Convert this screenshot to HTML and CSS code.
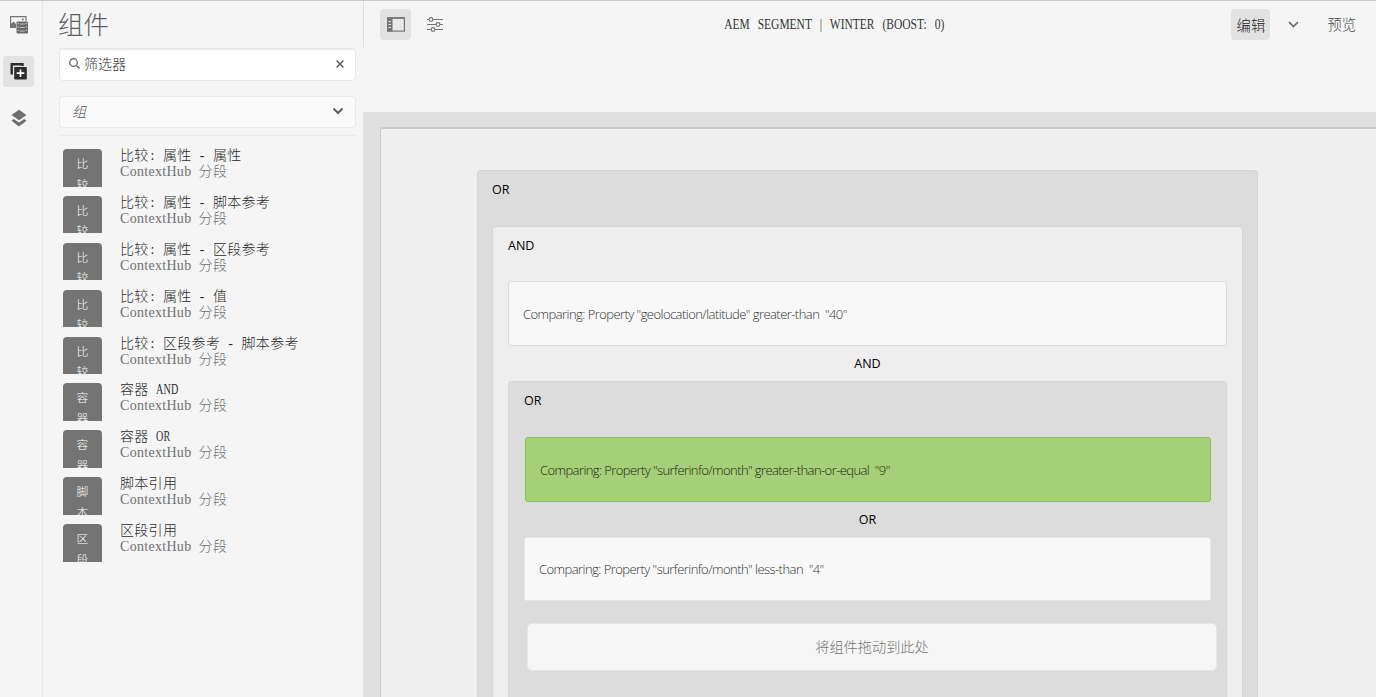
FILE: index.html
```html
<!DOCTYPE html>
<html lang="zh-CN">
<head>
<meta charset="utf-8">
<title>AEM Segment</title>
<link rel="stylesheet" href="styles.css">
</head>
<body>
<div class="app">
  <nav class="rail">
    <button class="rail-btn"><svg width="18" height="18" viewBox="0 0 18 18"><path d="M6 11.500H.6V.6h15.400V5" fill="none" stroke="#747474" stroke-width="1.200"/><path d="M1 11.500V8l2.500-2.500L6 8v3.500z" fill="#747474"/><circle cx="12.800" cy="3.600" r="1" fill="#747474"/><rect x="6.500" y="5.500" width="11.500" height="12" rx="1" fill="#686868"/><path d="M9.800 8h5M9.800 11.500h5M9.800 15h5" stroke="#c9c9c9" stroke-width=".9"/><path d="M8.200 7v10M16.300 7v10" stroke="#f5f5f5" stroke-width=".9" stroke-dasharray="1.200 2.200"/></svg></button>
    <button class="rail-btn active"><svg width="18" height="18" viewBox="0 0 18 18"><path d="M1.700 12.500V2.200h10.800V4" fill="none" stroke="#2c2c2c" stroke-width="2.400"/><rect x="4.200" y="5" width="12.600" height="12.400" rx="1" fill="#2c2c2c"/><path d="M10.500 7.400v7.600M6.700 11.200h7.600" stroke="#fff" stroke-width="1.700"/></svg></button>
    <button class="rail-btn"><svg width="18" height="18" viewBox="0 0 18 18"><path d="M9 .8 16.500 6 9 11.200 1.500 6z" fill="#6e6e6e"/><path d="M3.800 9.900 1.500 11.700 9 17.500l7.500-5.800-2.300-1.800L9 13.600z" fill="#6e6e6e"/></svg></button>
  </nav>
  <aside class="panel">
    <h1 class="panel-title">组件</h1>
    <div class="field search">
      <svg width="11" height="11" viewBox="0 0 11 11" fill="none" stroke="#5a5a5a" stroke-width="1.200"><circle cx="4.500" cy="4.500" r="3.800"/><path d="m7.300 7.300 3.200 3.200"/></svg>
      <span class="field-text">筛选器</span>
      <svg width="8" height="8" viewBox="0 0 8 8" stroke="#5a5a5a" stroke-width="1.400"><path d="m.6.6 6.800 6.800M7.400.6.6 7.400"/></svg>
    </div>
    <div class="field select">
      <span class="field-text">组</span>
      <svg width="12" height="8" viewBox="0 0 12 8" fill="none" stroke="#5e5e5e" stroke-width="2"><path d="m1.500 1.500 4.500 4.500 4.500-4.500"/></svg>
    </div>
    <ul class="list">
      <li class="item"><div class="thumb">比<br>较</div><div class="meta"><p class="name">比较<i class="colon">:</i>属性 <b>-</b> 属性</p><p class="group">ContextHub 分段</p></div></li>
      <li class="item"><div class="thumb">比<br>较</div><div class="meta"><p class="name">比较<i class="colon">:</i>属性 <b>-</b> 脚本参考</p><p class="group">ContextHub 分段</p></div></li>
      <li class="item"><div class="thumb">比<br>较</div><div class="meta"><p class="name">比较<i class="colon">:</i>属性 <b>-</b> 区段参考</p><p class="group">ContextHub 分段</p></div></li>
      <li class="item"><div class="thumb">比<br>较</div><div class="meta"><p class="name">比较<i class="colon">:</i>属性 <b>-</b> 值</p><p class="group">ContextHub 分段</p></div></li>
      <li class="item"><div class="thumb">比<br>较</div><div class="meta"><p class="name">比较<i class="colon">:</i>区段参考 <b>-</b> 脚本参考</p><p class="group">ContextHub 分段</p></div></li>
      <li class="item"><div class="thumb">容<br>器</div><div class="meta"><p class="name">容器 <span class="narrow">AND</span></p><p class="group">ContextHub 分段</p></div></li>
      <li class="item"><div class="thumb">容<br>器</div><div class="meta"><p class="name">容器 <span class="narrow">OR</span></p><p class="group">ContextHub 分段</p></div></li>
      <li class="item"><div class="thumb">脚<br>本</div><div class="meta"><p class="name">脚本引用</p><p class="group">ContextHub 分段</p></div></li>
      <li class="item"><div class="thumb">区<br>段</div><div class="meta"><p class="name">区段引用</p><p class="group">ContextHub 分段</p></div></li>
    </ul>
  </aside>
  <main class="main">
    <header class="topbar">
      <div class="tools">
        <button class="tool active"><svg width="18" height="15" viewBox="0 0 18 15"><rect x=".6" y=".9" width="16.800" height="13.200" fill="#e9e9e9" stroke="#747474" stroke-width="1.200"/><path d="M0 .3h18v1.500H0zM0 1h5.500v13.500H0z" fill="#747474"/><path d="M1.500 4.500H4M1.500 7.500H4M1.500 10.500H4" stroke="#e3e3e3" stroke-width="1"/></svg></button>
        <button class="tool"><svg width="16" height="15" viewBox="0 0 16 15" fill="#f5f5f5" stroke="#747474" stroke-width="1.100"><path d="M0 2.500h16M0 7.500h16M0 12.500h16"/><circle cx="4" cy="2.500" r="1.900"/><circle cx="11" cy="7.500" r="1.900"/><circle cx="6" cy="12.500" r="1.900"/></svg></button>
      </div>
      <div class="doc-title">AEM SEGMENT | WINTER (BOOST: 0)</div>
      <div class="modes">
        <button class="mode active">编辑</button>
        <svg class="chev" width="11" height="7" viewBox="0 0 11 7" fill="none" stroke="#6a6a6a" stroke-width="1.700"><path d="m1 1 4.500 4.500L10 1"/></svg>
        <span class="mode preview">预览</span>
      </div>
    </header>
    <section class="canvas">
      <div class="page">
        <div class="group-box or outer">
          <div class="box-label">OR</div>
          <div class="group-box and">
            <div class="box-label">AND</div>
            <div class="rule"><span class="geo">Comparing: Property "geolocation/latitude" greater-than&nbsp; "40"</span></div>
            <div class="joiner">AND</div>
            <div class="group-box or inner">
              <div class="box-label">OR</div>
              <div class="rule match"><span class="gte">Comparing: Property "surferinfo/month" greater-than-or-equal&nbsp; "9"</span></div>
              <div class="joiner">OR</div>
              <div class="rule plain"><span class="lt">Comparing: Property "surferinfo/month" less-than&nbsp; "4"</span></div>
              <div class="drop">将组件拖动到此处</div>
            </div>
          </div>
        </div>
      </div>
    </section>
  </main>
</div>
</body>
</html>
```
FILE: styles.css
```css
* { box-sizing: border-box; }
body { margin: 0; background: #f5f5f5; font-family: "Open Sans", "Noto Sans CJK SC", sans-serif; font-weight: 300; color: #4b4b4b; }
button { border: 0; padding: 0; background: none; font: inherit; color: inherit; }
h1, p, ul { margin: 0; padding: 0; }
svg { display: block; flex: none; }
.app { display: flex; height: 697px; overflow: hidden; border-top: 1px solid #ccc; }
.rail { width: 43px; flex: none; border-right: 1px solid #e6e6e6; display: flex; flex-direction: column; gap: 15.5px; padding: 8px 0 0 3px; }
.rail-btn { width: 31px; height: 31px; border-radius: 3px; display: flex; align-items: center; justify-content: center; }
.rail-btn.active { background: #e2e2e2; }
.panel { width: 321px; flex: none; padding: 0 8px 0 16px; background: linear-gradient(#dedede, #dedede) right top / 1px 46px no-repeat; }
.panel-title { font: 300 25.500px/44px "Noto Sans CJK SC", sans-serif; color: #5f5f5f; height: 48px; border-bottom: 1px solid #e8e8e8; text-indent: -1px; }
.field { height: 32px; border: 1px solid #e8e8e8; border-radius: 4px; display: flex; align-items: center; background: #fff; font-family: "Noto Sans CJK SC", sans-serif; font-size: 14px; }
.search { padding: 0 11px 3px 9px; }
.search .field-text { margin-left: 4px; padding-bottom: 1px; color: #333; }
.field-text { flex: 1; line-height: 20px; }
.select { margin-top: 15px; background: #fafafa; padding: 0 11px 2px 12px; }
.select .field-text { font-style: italic; color: #5a5a5a; }
.list { list-style: none; margin-top: 7px; border-top: 1px solid #ebebeb; padding: 13px 0 0 4px; }
.item { display: flex; height: 46.9px; }
.thumb { width: 39px; height: 37.5px; flex: none; overflow: hidden; background: #747474; border-radius: 4px 4px 0 0; color: #fff; font: 300 11.800px/20.500px "Noto Sans CJK SC", sans-serif; text-align: center; padding-top: 4px; }
.meta { margin-left: 18px; }
.name, .group { font: 300 14px/16px "Liberation Serif", "Noto Sans CJK SC", serif; height: 16px; letter-spacing: .3px; word-spacing: 3.350px; white-space: pre; }
.name { margin-top: -1px; color: #2c2c2c; }
.group { color: #707070; }
.name b { display: inline-block; width: 7.150px; font-weight: 400; text-align: center; }
.colon { display: inline-block; width: 14.300px; font-style: normal; padding-left: 2px; }
.narrow { display: inline-block; transform: scaleX(.72); transform-origin: left; }
.main { flex: 1; min-width: 0; display: flex; flex-direction: column; margin-left: -1px; }
.topbar { height: 111px; flex: none; display: grid; grid-template-columns: 1fr auto 1fr; align-items: start; padding: 8px 20px 0 17px; }
.tools { display: flex; gap: 8px; }
.tool { width: 31px; height: 31px; border-radius: 4px; display: flex; align-items: center; justify-content: center; }
.tool.active, .mode.active { background: #e2e2e2; border-radius: 4px; }
.doc-title { font: 400 14px/32px "Liberation Serif", serif; color: #333; word-spacing: 6.300px; white-space: pre; margin-right: 68px; transform: scaleX(.82); }
.modes { display: flex; align-items: center; justify-content: flex-end; height: 31px; font: 300 14.300px/29px "Noto Sans CJK SC", sans-serif; }
.mode.active { width: 39px; height: 31px; color: #222; }
.preview { height: 31px; }
.chev { margin: 0 28px 0 18px; }
.canvas { flex: 1; background: #e0e0e0; padding: 15px 0 0 17px; min-height: 0; }
.page { height: 570px; background: #efefef; border: 1px solid #cacaca; border-width: 2px 0 0 1px; border-radius: 3px 0 0 0; padding: 41px 0 0 96px; }
.group-box { border: 1px solid #d5d5d5; border-radius: 3px; font-size: 13px; }
.or { background: #dcdcdc; }
.outer { width: 781px; height: 620px; padding: 0 14px; }
.and { background: #eee; height: 620px; padding: 0 15px; margin-top: 17px; }
.inner { height: 440px; padding: 0 15px; }
.box-label, .joiner { color: #000; font-family: "Open Sans", sans-serif; font-size: 12.500px; font-weight: 400; line-height: 38px; height: 38px; }
.inner > .box-label { height: 55px; }
.and > .box-label { height: 54px; line-height: 37px; }
.rule { height: 65px; background: #f8f8f8; border: 1px solid #dcdcdc; border-radius: 3px; padding: 0 14px; font-size: 13px; line-height: 64px; white-space: pre; color: #333; }
.match { background: #a6cf79; border-color: #87c255; color: #1c2811; margin-left: 1px; }
.plain { height: 64px; border-color: #e8e8e8; line-height: 62px; }
.joiner { text-align: center; height: 35px; line-height: 36px; }
.geo, .lt { letter-spacing: -.550px; }
.gte { letter-spacing: -.580px; }
.drop { margin: 22px -6px 0 3px; height: 48px; border: 1px solid #e8e8e8; border-radius: 5px; background: #f6f6f6; text-align: center; font: 300 14.200px/44px "Noto Sans CJK SC", sans-serif; color: #777; }
```
